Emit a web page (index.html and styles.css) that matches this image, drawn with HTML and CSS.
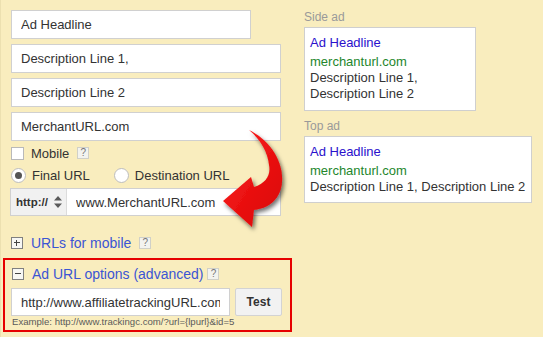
FILE: index.html
```html
<!DOCTYPE html>
<html>

<head>
    <link rel="stylesheet" href="styles.css">
</head>

<body>
    <div class="page">
        <div class="editor">
            <input class="field short" type="text" value="Ad Headline">
            <input class="field" type="text" value="Description Line 1,">
            <input class="field" type="text" value="Description Line 2">
            <input class="field" type="text" value="MerchantURL.com">

            <label class="row mobile">
                <span class="checkbox"></span>Mobile<span class="help">?</span>
            </label>

            <div class="row radios">
                <label class="radio-option"><span class="radio checked"></span>Final URL</label>
                <label class="radio-option"><span class="radio"></span>Destination URL</label>
            </div>

            <div class="url-field">
                <div class="protocol">
                    http://
                    <svg class="updown" width="8" height="12" viewBox="0 0 8 12">
                        <path d="M4 0 L8 4.5 L0 4.5 Z M0 7.5 L8 7.5 L4 12 Z" fill="#5a5a5a"/>
                    </svg>
                </div>
                <input class="url-input" type="text" value="www.MerchantURL.com">
            </div>

            <div class="row toggle">
                <span class="toggle-box plus"></span><a class="link">URLs for mobile</a><span class="help">?</span>
            </div>

            <div class="advanced">
                <div class="row toggle">
                    <span class="toggle-box minus"></span><a class="link">Ad URL options (advanced)</a><span class="help">?</span>
                </div>
                <div class="tracking">
                    <input class="tracking-input" type="text" value="http://www.affiliatetrackingURL.com">
                    <button class="test-button">Test</button>
                </div>
                <div class="example">Example: http://www.trackingc.com/?url={lpurl}&amp;id=5</div>
            </div>
        </div>

        <div class="preview">
            <div class="preview-label">Side ad</div>
            <div class="ad side-ad">
                <div class="ad-headline">Ad Headline</div>
                <div class="ad-url">merchanturl.com</div>
                <div class="ad-text">Description Line 1,</div>
                <div class="ad-text">Description Line 2</div>
            </div>

            <div class="preview-label top-label">Top ad</div>
            <div class="ad top-ad">
                <div class="ad-headline">Ad Headline</div>
                <div class="ad-url">merchanturl.com</div>
                <div class="ad-text">Description Line 1, Description Line 2</div>
            </div>
        </div>

        <!-- callout arrow drawn over the form -->
        <svg class="arrow" width="75" height="110" viewBox="0 0 75 110">
            <defs>
                <linearGradient id="arrowFill" x1="0" y1="0" x2="1" y2="1">
                    <stop offset="0" stop-color="#ff2424"/>
                    <stop offset="1" stop-color="#d80000"/>
                </linearGradient>
                <filter id="arrowShadow" x="-30%" y="-30%" width="160%" height="160%">
                    <feDropShadow dx="2" dy="3" stdDeviation="2" flood-color="#000" flood-opacity="0.55"/>
                </filter>
            </defs>
            <path d="M33 5 C52 14 68 35 66 57 C65 72 55 83 38 85 L36 102 L7 76 L35 52 L38 62 C50 58 55 50 53 40 C52 28 45 15 33 5 Z"
                fill="url(#arrowFill)" filter="url(#arrowShadow)"/>
        </svg>
    </div>
</body>

</html>
```

FILE: styles.css
```css
body {
    margin: 0;
    background: #f9edbe;
    font-family: "Liberation Sans", Arial, sans-serif;
    font-size: 13px;
    color: #333;
}

.page {
    position: relative;
    display: flex;
    gap: 23px;
    min-height: 337px;
    box-sizing: border-box;
    border-left: 1px solid #ece0b0;
    padding-left: 10px;
}

.editor {
    width: 270px;
    padding-top: 10px;
    display: flex;
    flex-direction: column;
}

.field {
    box-sizing: border-box;
    width: 270px;
    height: 29px;
    margin: 0 0 5px 0;
    padding: 0 9px;
    border: 1px solid #d0d0d0;
    background: white;
    font-family: inherit;
    font-size: 13px;
    color: #333;
    outline: none;
}

.field.short {
    width: 240px;
}

.row {
    display: flex;
    align-items: center;
}

.mobile {
    height: 14px;
}

.checkbox {
    width: 11px;
    height: 11px;
    border: 1px solid #b9b9b9;
    background: white;
    margin-right: 7px;
}

.help {
    box-sizing: border-box;
    width: 12px;
    height: 12px;
    margin-left: 8px;
    border: 1px solid #d0d0c8;
    background: #f3f3ef;
    color: #777;
    font-size: 10px;
    line-height: 10px;
    text-align: center;
}

.radios {
    height: 16px;
    margin-top: 7px;
    gap: 24px;
}

.radio-option {
    display: flex;
    align-items: center;
}

.radio {
    box-sizing: border-box;
    width: 15px;
    height: 15px;
    border: 1px solid #bdbdbd;
    border-radius: 50%;
    background: white;
    margin-right: 6px;
    display: flex;
    align-items: center;
    justify-content: center;
}

.radio.checked::after {
    content: '';
    width: 7px;
    height: 7px;
    border-radius: 50%;
    background: #555;
}

.url-field {
    display: flex;
    margin-top: 5px;
    margin-left: -1px;
    height: 28px;
    border: 1px solid #d0d0d0;
    box-sizing: border-box;
    width: 271px;
    background: white;
}

.protocol {
    width: 50px;
    padding-left: 5px;
    background: #f1f1f1;
    border-right: 1px solid #dcdcdc;
    display: flex;
    align-items: center;
    font-size: 11.5px;
    font-weight: bold;
    color: #333;
}

.updown {
    margin-left: 6px;
}

.url-input {
    flex: 1;
    min-width: 0;
    border: none;
    padding: 0 9px;
    font-family: inherit;
    font-size: 13px;
    color: #333;
    outline: none;
    background: white;
}

.toggle {
    height: 16px;
    margin-top: 19px;
}

.toggle-box {
    box-sizing: border-box;
    position: relative;
    width: 12px;
    height: 12px;
    border: 1px solid #808080;
    background: #f7f7f4;
    margin-right: 8px;
}

.toggle-box::before,
.plus::after {
    content: '';
    position: absolute;
    background: #444;
}

.toggle-box::before {
    left: 2px;
    right: 2px;
    top: 4px;
    height: 1px;
}

.plus::after {
    top: 2px;
    bottom: 2px;
    left: 4px;
    width: 1px;
}

.link {
    color: #3b55d4;
    font-size: 14px;
    cursor: pointer;
}

.advanced {
    margin: 7px -11px 0 -8px;
    border: 2px solid #e60000;
    padding: 6px 0 2px 6px;
}

.advanced .toggle {
    margin-top: 0;
    margin-left: 1px;
}

.advanced .help {
    margin-left: 4px;
}

.tracking {
    display: flex;
    gap: 5px;
    margin-top: 6px;
}

.tracking-input {
    box-sizing: border-box;
    width: 219px;
    height: 28px;
    padding: 0 9px;
    border: 1px solid #d0d0d0;
    font-family: inherit;
    font-size: 13px;
    color: #333;
    outline: none;
}

.test-button {
    box-sizing: border-box;
    width: 47px;
    height: 28px;
    border: 1px solid #d3d3d3;
    border-radius: 2px;
    background: #f2f2f2;
    font-family: inherit;
    font-size: 12px;
    font-weight: bold;
    color: #333;
}

.example {
    margin-left: 1px;
    font-size: 9.6px;
    line-height: 12px;
    color: #5a5a5a;
}

.preview {
    padding-top: 9px;
    display: flex;
    flex-direction: column;
    align-items: flex-start;
}

.preview-label {
    color: #9a9a9a;
    font-size: 12px;
    line-height: 17px;
    margin-bottom: 1px;
}

.top-label {
    margin-top: 7px;
}

.ad {
    box-sizing: border-box;
    background: white;
    border: 1px solid #cfcfcf;
    padding: 7px 5px 8px;
    line-height: 16px;
    font-size: 13px;
}

.side-ad {
    width: 172px;
}

.top-ad {
    width: 228px;
    padding-bottom: 7px;
}

.ad-headline {
    color: #2a10cc;
    margin-bottom: 3px;
}

.ad-url {
    color: #23862c;
}

.ad-text {
    color: #333;
}

.arrow {
    position: absolute;
    left: 215px;
    top: 125px;
    overflow: visible;
}
```
